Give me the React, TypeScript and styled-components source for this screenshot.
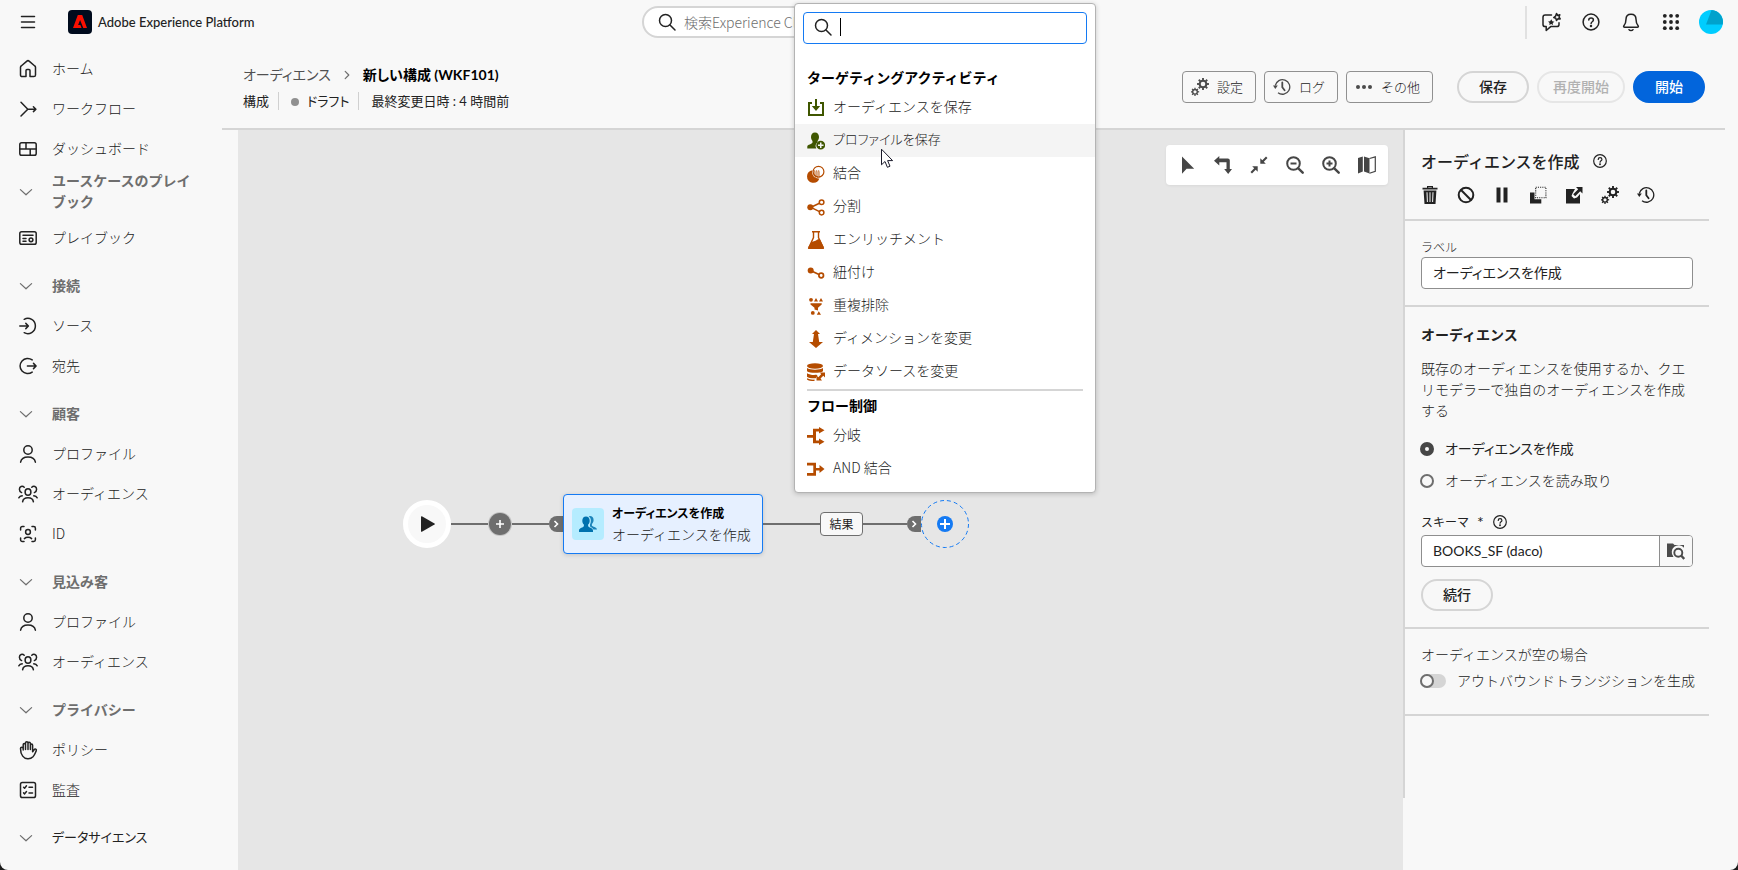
import React from "react";
import styled, { createGlobalStyle, css } from "styled-components";

const Global = createGlobalStyle`
  *, *::before { box-sizing: border-box; }
  body {
    margin: 0;
    background: #1c1c1c;
    color: #222;
    font-family: "Noto Sans CJK JP", "Noto Sans", sans-serif;
    font-size: 14px;
    line-height: 21px;
  }
  button, input { font: inherit; color: inherit; }
  h1, h2, h3, p { margin: 0; padding: 0; }
  a { color: inherit; text-decoration: none; }
`;

/* Proportional kana with a narrower Latin face. */
const palt = css`
  font-family: Lato, "Noto Sans CJK JP", sans-serif;
  font-feature-settings: "palt";
`;

/* ---------- icons ---------- */

const Line = styled.svg.attrs({ viewBox: "0 0 20 20", "aria-hidden": true })<{ $size?: number }>`
  width: ${(p) => p.$size ?? 20}px;
  height: ${(p) => p.$size ?? 20}px;
  flex: none;
  display: block;
  fill: none;
  stroke: currentColor;
  stroke-width: 1.5;
  stroke-linecap: round;
  stroke-linejoin: round;
`;

const Solid = styled.svg.attrs({ viewBox: "0 0 18 18", "aria-hidden": true })<{ $size?: number }>`
  width: ${(p) => p.$size ?? 18}px;
  height: ${(p) => p.$size ?? 18}px;
  flex: none;
  display: block;
  fill: currentColor;
`;

const MenuIcon = () => <Line><path d="M3.5 4.5h13M3.5 10h13M3.5 15.5h13" /></Line>;
const HomeIcon = () => <Line><path d="M8 17.6H4.2a1.7 1.7 0 0 1-1.7-1.7V8.3c0-.5.2-1 .7-1.3l5.7-4.9a1.7 1.7 0 0 1 2.2 0L16.8 7c.5.3.7.8.7 1.3v7.6a1.7 1.7 0 0 1-1.7 1.7H12v-6c0-.6-.5-1-1-1H9c-.6 0-1 .4-1 1z" /></Line>;
const WorkflowIcon = () => <Line><path d="M3 3.2l6.8 7L3 17M9.8 10.2h8M15.4 7.8l2.5 2.4-2.5 2.4" /></Line>;
const DashboardIcon = () => <Line><rect x="1.8" y="3.7" width="16.4" height="12.6" rx="1.8" /><path d="M1.8 10h16.4M8 3.7V10M12.2 10v6.3" /></Line>;
const PlaybookIcon = () => <Line><rect x="1.8" y="3.7" width="16.4" height="12.6" rx="1.8" /><path d="M5 7.2h10M5 10.4h3M5 13.2h3" /><circle cx="13" cy="11.8" r="1.9" /></Line>;
const SourceIcon = () => <Line><path d="M6.2 3.3a7.6 7.6 0 1 1 0 13.4M1.8 10h8.5M7.8 7.4l2.6 2.6-2.6 2.6" /></Line>;
const DestIcon = () => <Line><path d="M14.2 3.9a7.6 7.6 0 1 0 0 12.2M9.4 10h8.6M15.5 7.4l2.6 2.6-2.6 2.6" /></Line>;
const PersonIcon = () => <Line><circle cx="10" cy="6" r="4.2" /><path d="M2.6 18.2c.6-3.4 3.5-5.2 7.4-5.2s6.800 1.800 7.400 5.200" /></Line>;
const PeopleIcon = () => <Line><ellipse cx="10" cy="8" rx="2.9" ry="3.300" /><path d="M4.600 17.800c.4-2.700 2.500-4 5.400-4s5 1.300 5.400 4M6.200 3.300C4.400 1.500 1.400 2.500 1.400 5.300c0 1.500.9 2.800 2.200 3.300M13.800 3.300c1.800-1.800 4.800-.8 4.800 2 0 1.500-.9 2.800-2.200 3.300M.8 13.800c.6-1 1.700-1.700 3.400-2M19.200 13.800c-.6-1-1.700-1.700-3.400-2" /></Line>;
const IdentityIcon = () => <Line><path d="M2.600 6V4.300c0-1 .7-1.700 1.700-1.700H6M14 2.600h1.700c1 0 1.700.7 1.700 1.700V6M17.400 14v1.700c0 1-.7 1.700-1.700 1.700H14M6 17.400H4.300c-1 0-1.700-.7-1.700-1.700V14M6.400 14.600c1.800-1.700 5.400-1.700 7.200 0" /><circle cx="10" cy="8" r="2.400" /></Line>;
const HandIcon = () => <Line><path d="M5.200 10V4.800c0-1.600 2.300-1.600 2.300 0V3c0-1.700 2.500-1.700 2.500 0v6.500M10 3.600c0-1.700 2.400-1.700 2.400 0v6M12.400 5.200c0-1.500 2.200-1.500 2.200 0v6.600l1.500-2.100c1-1.300 2.800-.4 2.100 1.200-1 2.200-1.700 4.300-3.200 5.900a6.800 6.800 0 0 1-10.300-.7C3.200 14.200 2.500 12 2.500 8.400c0-1.600 2.600-1.600 2.700 0M7.500 3.600v5.900" /></Line>;
const AuditIcon = () => <Line><rect x="2.500" y="2.500" width="15" height="15" rx="1.800" /><path d="M5.600 7.200l1 1 1.900-2.400M5.600 12.900l1 1 1.900-2.400M11 7.300h3.500M11 13h3.500" /></Line>;
const ChevronIcon = () => <Line><path d="M3 7l7 6.500L17 7" /></Line>;
const SmallChevron = () => <Line $size={12}><path strokeWidth="2" d="M7 4l6 6-6 6" /></Line>;
const SearchIcon = () => <Line><circle cx="8.500" cy="8.500" r="6" /><path d="M13 13l5 5" /></Line>;
const HelpIcon = ({ size }: { size?: number }) => <Line $size={size}><circle cx="10" cy="10" r="7.900" /><path d="M7.800 8c0-2.800 4.600-2.800 4.600 0 0 1.800-2.300 1.700-2.300 3.500" /><circle cx="10" cy="14" r=".5" /></Line>;
const ChatIcon = () => <Line><path d="M10.500 3H4.200C3 3 2 3.900 2 5.200v7.300c0 1.200 1 2.100 2.200 2.100h1v3.900l4.500-3.900h6.100c1.200 0 2.200-.9 2.200-2.100v-1.800" /><path fill="currentColor" stroke="none" d="M10.300 7.300l1 1.900 2.100.5-1.700 1.300.3 2.100-1.800-1-1.900.9.300-2.100L7 9.500l2.100-.3z" /><path d="M15.500 1.400l1 2 2.300-.6-.8 2.200 1.200 1.900-2.200-.1-1.500 1.600-.7-2.100-2.100-.8 1.800-1.300z" /></Line>;
const BellIcon = () => <Line><path d="M10 2.200c-3.200 0-5 2.300-5 5.100 0 3.200-.7 4.800-2.100 6.400-.6.800-.2 1.600.7 1.600h12.800c.9 0 1.300-.8.700-1.600C15.700 12.100 15 10.500 15 7.300c0-2.800-1.800-5.100-5-5.100zM8 17.700c.8 1.200 3.200 1.200 4 0" /></Line>;
const AppsIcon = () => (
  <Line>
    {[3.8, 10, 16.2].map((y) =>
      [3.8, 10, 16.2].map((x) => <circle key={`${x}-${y}`} cx={x} cy={y} r="1.900" fill="currentColor" stroke="none" />)
    )}
  </Line>
);

const Gear = ({ x, y, r, teeth = 8 }: { x: number; y: number; r: number; teeth?: number }) => (
  <g transform={`translate(${x} ${y})`} fill="none" stroke="currentColor">
    <circle r={r * 0.68} strokeWidth={r * 0.42} />
    {Array.from({ length: teeth }, (_, i) => (
      <path key={i} transform={`rotate(${(360 / teeth) * i})`} d={`M0 ${-r * 0.75}V${-r * 1.22}`} strokeWidth={r * 0.38} />
    ))}
  </g>
);
const GearsIcon = () => <Solid><Gear x={12} y={6} r={4.900} /><Gear x={4} y={13.800} r={3.400} /></Solid>;
const HistoryIcon = () => <Solid><path fill="none" stroke="currentColor" strokeWidth="1.300" d="M2.300 7.500A7.300 7.300 0 1 1 5 14.700" /><path d="M0 7.500h4.800L2.300 11z" /><path fill="none" stroke="currentColor" strokeWidth="1.800" strokeLinecap="round" d="M9.300 4.500v4.700l2.300 3" /></Solid>;
const MoreIcon = () => <Solid><circle cx="3" cy="9" r="2" /><circle cx="9" cy="9" r="2" /><circle cx="15" cy="9" r="2" /></Solid>;

const PointerIcon = () => <Solid><path d="M4 .5v17.300l4.600-5.100h7.600z" /></Solid>;
const RouteIcon = () => <Solid><path d="M5.300 0v2.500h8.500c1.200 0 2 .8 2 2V13H18l-3.800 5-4-5h2.300V6.300H5.300v3.200L0 4.700z" /></Solid>;
const CollapseIcon = () => <Solid><path d="M10.300 2.200v5.500h5.500l-2-2L17.500 2 16 .5l-3.700 3.700zM7.700 15.800v-5.500H2.200l2 2L.5 16 2 17.500l3.700-3.700z" /></Solid>;
const ZoomIcon = ({ plus }: { plus?: boolean }) => (
  <Solid><g fill="none" stroke="currentColor" strokeWidth="2"><circle cx="7.500" cy="7.500" r="6.300" /><path strokeLinecap="round" strokeWidth="2.400" d="M12.300 12.300l4.400 4.400" /><path d={plus ? "M4.500 7.500h6M7.500 4.500v6" : "M4.500 7.500h6"} /></g></Solid>
);
const MapIcon = () => <Solid><path d="M0 2l4.800-1.500v15L0 17.500zM6 .5l5.500 1.800v15.200L6 15.500z" /><path d="M11.500 2.500L17.300.8v14.500l-5.800 2" fill="none" stroke="currentColor" strokeWidth="1.200" /></Solid>;

const TrashIcon = () => <Solid><path d="M6 0h6v1.800h4.500v1.700h-15V1.800H6zM7.200 1.200v.6h3.600v-.6z" fillRule="evenodd" /><path fillRule="evenodd" d="M2.600 4.500h12.800L14.500 18h-11zM5.500 6.300l.4 9.700h1L6.500 6.300zm3 0V16h1V6.300zm3 0L11.100 16h1l.4-9.700z" /></Solid>;
const BanIcon = () => <Solid><g fill="none" stroke="currentColor" strokeWidth="2"><circle cx="9" cy="9" r="7.300" /><path d="M3.800 3.800l10.400 10.400" /></g></Solid>;
const PauseIcon = () => <Solid><path d="M3.500 1.500h4v15h-4zM10.500 1.500h4v15h-4z" /></Solid>;
const CopyIcon = () => <Solid><path d="M1 6.500h4.500v6.800h6.800V17.500H1z" /><rect x="6.700" y="1.200" width="10.200" height="10.600" fill="none" stroke="currentColor" strokeWidth="1.100" strokeDasharray="1.100 1.100" /></Solid>;
const OpenIcon = () => <Solid><path d="M1 3h9L7.500 7.500 6.500 10l2.500 2.500 3-1L15 8v9.500H1z" /><path d="M11 1h6.500v6.500l-2.300-2.300-5 5-2-2 5-5z" /></Solid>;
const FolderSearchIcon = () => <Solid><path d="M0 1.500h6L7.500 3H17v2.800A6.300 6.300 0 0 0 6.300 14.500V15H0z" /><circle cx="11.300" cy="10.700" r="4" fill="none" stroke="currentColor" strokeWidth="1.900" /><path d="M14.300 13.700l3 3.300" stroke="currentColor" strokeWidth="2.400" /></Solid>;

const SaveAudienceIcon = () => <Solid><path d="M1 3h4v2H3v10h12V5h-2V3h4v14H1z" /><path d="M8 0h2v7h3.200L9 12 4.800 7H8z" /></Solid>;
const SaveProfileIcon = () => <Solid><path d="M8 .5c2.500 0 4 1.800 4 4.600 0 1.500-.6 3-1.400 3.900v1.200a5 5 0 0 0-1.300 6.300H.3v-2c0-1.800 5-2.500 5.200-4V9C4.600 8.100 4 6.600 4 5.100 4 2.300 5.500.5 8 .5z" /><path fillRule="evenodd" d="M13.700 8.800a4.400 4.400 0 1 1 0 8.800 4.400 4.400 0 0 1 0-8.800zM13 10.500v2h-2V14h2v2h1.500v-2h2v-1.500h-2v-2z" /></Solid>;
const CombineIcon = () => (
  <Solid>
    <path d="M5.500 5.200a6.300 6.300 0 1 0 6.800 8.300 6.300 6.300 0 0 1-6.800-8.300z" />
    <circle cx="11.500" cy="6.700" r="5.400" fill="none" stroke="currentColor" strokeWidth="1.200" />
    <path d="M7 6h6M6.500 8h6.500M6.500 10h6.500M8 12h4.500" stroke="currentColor" strokeWidth="1.200" strokeDasharray="1.200 .8" />
    <path d="M7.500 7h5M7.500 9h5M7.500 11h5" stroke="currentColor" strokeWidth="1" strokeDasharray="1 1" />
  </Solid>
);
const SplitIcon = () => <Solid><circle cx="3.300" cy="9.300" r="3" /><g fill="none" stroke="currentColor" strokeWidth="1.500"><path d="M4 9.300L13 5M4 9.300l9 4.500" /><circle cx="14.600" cy="4.200" r="2.300" /><circle cx="14.600" cy="14.600" r="2.300" /></g></Solid>;
const FlaskIcon = () => <Solid><path d="M5 0h8v1.500H5z" /><path d="M6.500 1v5.500L2 16.200M11.500 1v5.500L16 16.200" fill="none" stroke="currentColor" strokeWidth="1.400" /><path d="M4.500 11l4-1.200 2.500-1.600 1.800-.2L17 16.500c.3 1-.2 1.500-1 1.500H2c-.8 0-1.300-.5-1-1.500z" /></Solid>;
const LinkIcon = () => <Solid><circle cx="3.700" cy="6.500" r="3" /><g fill="none" stroke="currentColor" strokeWidth="1.700"><path d="M4 6.700l8 3.700" /><circle cx="14.200" cy="11.500" r="2.300" /></g></Solid>;
const FunnelIcon = () => <Solid><circle cx="4" cy="2.800" r="1.900" /><path d="M7 4.600L9 1l2 3.600zM12 4.600L14 1l2 3.600zM3.500 6.200h11.200v1.300L11 10.800v2.800l-3.500-1v-1.800L3.500 7.500zM9.800 17.800l2-3.600 2.200 3.600z" /><circle cx="5.800" cy="15.900" r="1.900" /></Solid>;
const DimensionIcon = () => <Solid><path d="M9 0l4 4h-2l1.200 8H16l-7 6-7-6h3.800L7 4H5z" /></Solid>;
const DatasourceIcon = () => <Solid><ellipse cx="8" cy="3" rx="8" ry="2.700" /><path d="M0 5c3 2.200 13 2.200 16 0v3.200C13 10.400 3 10.400 0 8.200zM0 10.200c2.500 1.600 6 2 9.500 1.600l1 1-1.800 2.500C5 15.500 1.500 15 0 13.700zM0 15.300c2 1 4.500 1.500 7.500 1.300V18C4 18 1 17.500 0 16.500z" /><path d="M13 9.500h5v5l-1.700-1.700-2.800 2.800L15 17.500h-5.500v-5l1.800 1.700 2.800-2.900z" /></Solid>;
const ForkIcon = () => <Solid><path d="M0 8h6V1.800h6V0l5.500 3.200L12 6.500V4.600H9v8.900h3v-2l5.500 3.300L12 18v-1.800H6v-5.500H0z" /></Solid>;
const JoinIcon = () => <Solid><path d="M0 2.800h9V8h3.500V5l5 4-5 4v-2.600H9v5.300H0V13h6.300V5.500H0z" /></Solid>;

/* ---------- page frame ---------- */

const Page = styled.div`
  position: relative;
  min-height: 100vh;
  display: flex;
  flex-direction: column;
  background: #f8f8f8;
  border-radius: 0 0 8px 8px;
  overflow: hidden;
`;

const TopBar = styled.header`
  display: grid;
  grid-template-columns: 1fr 450px 1fr;
  align-items: center;
  height: 44px;
  padding-right: 4px;
`;

const Brand = styled.div`
  display: flex;
  align-items: center;
  padding-left: 18px;
`;

const BrandName = styled.span`
  margin-left: 6px;
  ${palt}
  font-size: 13px;
  font-weight: 500;
`;

const IconButton = styled.button`
  display: grid;
  place-items: center;
  padding: 0;
  border: 0;
  background: none;
  cursor: pointer;
`;

const Logo = styled.svg`
  width: 24px;
  height: 24px;
  margin-left: 30px;
`;

const GlobalSearch = styled.label`
  height: 32px;
  display: flex;
  align-items: center;
  gap: 7px;
  padding: 0 13px;
  border: 2px solid #d5d5d5;
  border-radius: 16px;
  background: #fff;
  input {
    flex: 1;
    border: 0;
    outline: 0;
    padding: 0;
    background: none;
    &::placeholder { color: #6e6e6e; font-weight: 300; opacity: 1; }
  }
`;

const TopActions = styled.div`
  display: flex;
  justify-content: flex-end;
  align-items: center;
  gap: 20px;
  padding-right: 11px;
`;

const TopDivider = styled.span`
  width: 2px;
  height: 33px;
  background: #e1e1e1;
  margin-right: -6px;
`;

const Avatar = styled.svg`
  width: 24px;
  height: 24px;
  margin-left: -2px;
`;

const Columns = styled.div`
  flex: 1;
  display: flex;
`;

/* Text beside an icon, set slightly above the icon's centre. */
const Caption = styled.span`
  padding-bottom: 2px;
`;

const Nav = styled.nav`
  width: 222px;
  flex: none;
  padding-top: 5px;
`;

const NavItem = styled.a`
  display: flex;
  align-items: center;
  gap: 14px;
  height: 40px;
  padding-left: 18px;
  font-weight: 300;
`;

const NavGroup = styled.button<{ $tall?: boolean; $dark?: boolean }>`
  display: flex;
  align-items: center;
  gap: 18px;
  width: 100%;
  height: ${(p) => (p.$tall ? 49 : 40)}px;
  margin-top: ${(p) => (p.$tall ? 0 : 8)}px;
  padding: 0 24px ${(p) => (p.$tall ? 4 : 0)}px 18px;
  border: 0;
  background: none;
  color: ${(p) => (p.$dark ? "#222" : "#6e6e6e")};
  font-weight: ${(p) => (p.$dark ? 400 : 700)};
  text-align: left;
  cursor: pointer;
  ${(p) => p.$dark && css`${palt} font-size: 13px;`}
  svg { width: 16px; height: 16px; color: #6e6e6e; }
`;

const Main = styled.main`
  flex: 1;
  min-width: 0;
  display: flex;
  flex-direction: column;
`;

const PageHead = styled.div`
  display: flex;
  justify-content: space-between;
  align-items: flex-start;
  height: 86px;
  margin-right: 13px;
  padding: 19px 20px 0 21px;
  border-bottom: 2px solid #d5d5d5;
`;

const Crumbs = styled.div`
  display: flex;
  align-items: center;
  gap: 10px;
  ${palt}
  line-height: 24px;
  a { color: #505050; }
  svg { color: #6e6e6e; }
  h1 { font-size: 14px; line-height: 24px; font-weight: 700; color: #000; }
`;

const Meta = styled.div`
  display: flex;
  align-items: center;
  height: 24px;
  margin-top: 2px;
  ${palt}
  font-size: 13px;
  line-height: 18px;
  span + span {
    margin-left: 9px;
    padding-left: 12px;
    border-left: 1px solid #d0d0d0;
  }
`;

const Dot = styled.i`
  display: inline-block;
  width: 8px;
  height: 8px;
  margin-right: 8px;
  border-radius: 50%;
  background: #909090;
`;

const Actions = styled.div`
  display: flex;
  gap: 8px;
  padding-top: 8px;
`;

const ToolButton = styled.button`
  display: flex;
  align-items: center;
  gap: 8px;
  height: 32px;
  padding: 0 12px 0 8px;
  border: 1px solid #909090;
  border-radius: 4px;
  background: #f8f8f8;
  font-size: 13px;
  font-weight: 300;
  svg { color: #4b4b4b; }
`;

const PillButton = styled.button<{ $primary?: boolean }>`
  height: 32px;
  min-width: 72px;
  padding: 0 14px 2px;
  border: 2px solid ${(p) => (p.$primary ? "#0265dc" : "#d5d5d5")};
  border-radius: 16px;
  background: ${(p) => (p.$primary ? "#0265dc" : "#f8f8f8")};
  color: ${(p) => (p.$primary ? "#fff" : "#222")};
  font-weight: 500;
  line-height: 18px;
  &:disabled { border-color: #e6e6e6; color: #b1b1b1; }
`;

const PillGroup = styled.div`
  display: flex;
  gap: 8px;
  margin-left: 16px;
`;

const Work = styled.div`
  flex: 1;
  display: flex;
  padding-left: 16px;
`;

/* ---------- canvas ---------- */

const Canvas = styled.section`
  position: relative;
  flex: 1;
  min-width: 0;
  background: #e6e6e6;
`;

const CanvasTools = styled.div`
  position: absolute;
  top: 15px;
  right: 15px;
  display: flex;
  gap: 18px;
  height: 40px;
  padding: 0 12px;
  border-radius: 4px;
  background: #fff;
  color: #464646;
  box-shadow: 0 1px 3px rgba(0, 0, 0, 0.06);
`;

const Flow = styled.div`
  position: absolute;
  left: 165px;
  top: 364px;
  display: flex;
  align-items: center;
`;

const Edge = styled.span<{ $w: number }>`
  width: ${(p) => p.$w}px;
  height: 2px;
  background: #6e6e6e;
`;

const StartNode = styled.button`
  display: grid;
  place-items: center;
  width: 48px;
  height: 48px;
  padding: 0;
  border: 5px solid #fff;
  border-radius: 50%;
  background: #f8f8f8;
  color: #222;
`;

const AddButton = styled.button`
  display: grid;
  place-items: center;
  width: 22px;
  height: 22px;
  margin: 0 1px;
  padding: 0;
  border: 0;
  border-radius: 50%;
  background: #6e6e6e;
  color: #fff;
  box-shadow: 0 0 0 1px #c4c4c4;
`;

const Port = styled.span`
  display: grid;
  place-items: center;
  width: 14px;
  height: 16px;
  border-radius: 8px 0 0 8px;
  background: #6e6e6e;
  color: #fff;
`;

const Node = styled.article`
  display: flex;
  align-items: center;
  gap: 8px;
  width: 200px;
  height: 60px;
  padding: 0 8px;
  border: 1px solid #147af3;
  border-radius: 4px;
  background: #e6f0ff;
  box-shadow: 0 1px 4px rgba(0, 0, 0, 0.15);
  h3 { ${palt} font-size: 12px; line-height: 20px; font-weight: 700; color: #000; }
  p { line-height: 20px; font-weight: 300; white-space: nowrap; }
`;

const NodeIcon = styled.span`
  display: grid;
  place-items: center;
  flex: none;
  width: 32px;
  height: 32px;
  border-radius: 4px;
  background: #b5ecff;
  color: #0072ae;
`;

const EdgeLabel = styled.span`
  display: grid;
  place-items: center;
  width: 43px;
  height: 24px;
  border: 1px solid #6e6e6e;
  border-radius: 4px;
  background: #f8f8f8;
  font-size: 12px;
  line-height: 16px;
`;

const DropTarget = styled.button`
  width: 48px;
  height: 48px;
  padding: 0;
  border: 0;
  background: none;
  svg { display: block; }
`;

/* ---------- properties panel ---------- */

const Panel = styled.aside`
  flex: none;
  width: 306px;
  height: 668px;
  margin-right: 29px;
  border-left: 2px solid #d5d5d5;
`;

const PanelSection = styled.section<{ $h: number; $pad: number }>`
  height: ${(p) => p.$h}px;
  padding: ${(p) => p.$pad}px 16px 0;
  border-bottom: 2px solid #d5d5d5;
`;

const PanelTitle = styled.h2`
  display: flex;
  align-items: center;
  gap: 12px;
  font-size: 16px;
  line-height: 24px;
  font-weight: 500;
`;

const PanelTools = styled.div`
  display: flex;
  gap: 18px;
  margin-top: 13px;
`;

const FieldLabel = styled.label`
  display: flex;
  align-items: center;
  gap: 8px;
  font-size: 12px;
  line-height: 18px;
  font-weight: 300;
`;

const Field = styled.div`
  display: flex;
  height: 32px;
  margin-top: 1px;
  border: 1px solid #8e8e8e;
  border-radius: 4px;
  background: #fff;
  overflow: hidden;
  input {
    flex: 1;
    min-width: 0;
    padding: 0 11px 2px;
    border: 0;
    outline: 0;
    background: none;
    ${palt}
  }
  button {
    width: 33px;
    border-left: 1px solid #8e8e8e;
    background: #f8f8f8;
    color: #4b4b4b;
  }
`;

const SchemaRow = styled.div`
  margin: 16px 0 12px;
  label { margin-bottom: 4px; font-weight: 400; }
`;

const Required = styled.span`
  ${palt}
  font-size: 16px;
  line-height: 18px;
`;

const SubHead = styled.h3`
  font-size: 14px;
  line-height: 21px;
  font-weight: 700;
`;

const Copy = styled.p`
  margin: 13px 0 12px;
  font-weight: 300;
`;

const Choice = styled.label<{ $on?: boolean }>`
  display: flex;
  align-items: center;
  gap: 12px;
  height: 32px;
  font-weight: ${(p) => (p.$on ? 400 : 300)};
  ${(p) => p.$on && palt}
  input {
    appearance: none;
    width: 14px;
    height: 14px;
    margin: 0 -1px;
    border: 2px solid #6e6e6e;
    border-radius: 50%;
    background: #f8f8f8;
    &:checked { border: 5px solid #464646; }
  }
`;

const Toggle = styled.label`
  display: flex;
  align-items: center;
  gap: 11px;
  height: 32px;
  font-weight: 300;
  white-space: nowrap;
  input {
    appearance: none;
    flex: none;
    width: 26px;
    height: 14px;
    margin: 0 0 0 -1px;
    border-radius: 7px;
    background: #d5d5d5;
  }
  input::before {
    content: "";
    display: block;
    width: 14px;
    height: 14px;
    border: 2px solid #6e6e6e;
    border-radius: 50%;
    background: #f8f8f8;
  }
`;

const EmptyHead = styled.p`
  font-weight: 300;
`;

/* ---------- activity picker ---------- */

const Picker = styled.div`
  position: absolute;
  left: 794px;
  top: 3px;
  width: 302px;
  padding: 8px 0 7px;
  border: 1px solid #b3b3b3;
  border-radius: 4px;
  background: #fff;
  box-shadow: 0 1px 5px rgba(0, 0, 0, 0.2);
`;

const PickerSearch = styled.label`
  display: flex;
  align-items: center;
  gap: 7px;
  height: 32px;
  margin: 0 8px 23px;
  padding: 0 0 2px 9px;
  border: 1px solid #147af3;
  border-radius: 4px;
  input { width: 200px; border: 0; outline: 0; padding: 0; background: none; }
`;

const Caret = styled.span`
  width: 1px;
  height: 18px;
  margin-right: -7px;
  background: #000;
`;

const PickerHead = styled.h3`
  height: 24px;
  padding-left: 12px;
  font-size: 14px;
  line-height: 21px;
  font-weight: 700;
  color: #000;
`;

const PickerItem = styled.button<{ $active?: boolean; $green?: boolean }>`
  display: flex;
  align-items: center;
  gap: 8px;
  width: 100%;
  height: 33px;
  padding: 0 12px;
  border: 0;
  background: ${(p) => (p.$active ? "#f4f4f4" : "none")};
  font-weight: 300;
  text-align: left;
  ${Caption} { ${(p) => p.$active && css`${palt} font-size: 13px;`} }
  svg { color: ${(p) => (p.$green ? "#3f5600" : "#b54c00")}; }
`;

const PickerRule = styled.hr`
  height: 2px;
  margin: 1px 12px 4px;
  border: 0;
  background: #d5d5d5;
`;

const MouseCursor = styled.svg`
  position: absolute;
  left: 881px;
  top: 148px;
  width: 13px;
  height: 21px;
`;

/* ---------- data ---------- */

type Entry = { label: string; icon?: React.FC; tall?: boolean; dark?: boolean };

const nav: Entry[] = [
  { label: "ホーム", icon: HomeIcon },
  { label: "ワークフロー", icon: WorkflowIcon },
  { label: "ダッシュボード", icon: DashboardIcon },
  { label: "ユースケースのプレイブック", tall: true },
  { label: "プレイブック", icon: PlaybookIcon },
  { label: "接続" },
  { label: "ソース", icon: SourceIcon },
  { label: "宛先", icon: DestIcon },
  { label: "顧客" },
  { label: "プロファイル", icon: PersonIcon },
  { label: "オーディエンス", icon: PeopleIcon },
  { label: "ID", icon: IdentityIcon },
  { label: "見込み客" },
  { label: "プロファイル", icon: PersonIcon },
  { label: "オーディエンス", icon: PeopleIcon },
  { label: "プライバシー" },
  { label: "ポリシー", icon: HandIcon },
  { label: "監査", icon: AuditIcon },
  { label: "データサイエンス", dark: true },
];

const targeting: { label: string; icon: React.FC; green?: boolean; active?: boolean }[] = [
  { label: "オーディエンスを保存", icon: SaveAudienceIcon, green: true },
  { label: "プロファイルを保存", icon: SaveProfileIcon, green: true, active: true },
  { label: "結合", icon: CombineIcon },
  { label: "分割", icon: SplitIcon },
  { label: "エンリッチメント", icon: FlaskIcon },
  { label: "紐付け", icon: LinkIcon },
  { label: "重複排除", icon: FunnelIcon },
  { label: "ディメンションを変更", icon: DimensionIcon },
  { label: "データソースを変更", icon: DatasourceIcon },
];

const flowControl = [
  { label: "分岐", icon: ForkIcon },
  { label: "AND 結合", icon: JoinIcon },
];

const canvasTools: [string, React.ReactNode][] = [
  ["選択", <PointerIcon />],
  ["レイアウト", <RouteIcon />],
  ["全体表示", <CollapseIcon />],
  ["縮小", <ZoomIcon />],
  ["拡大", <ZoomIcon plus />],
  ["マップ", <MapIcon />],
];

const panelTools: [string, React.ReactNode][] = [
  ["削除", <TrashIcon />],
  ["無効化", <BanIcon />],
  ["一時停止", <PauseIcon />],
  ["コピー", <CopyIcon />],
  ["開く", <OpenIcon />],
  ["設定", <GearsIcon />],
  ["履歴", <HistoryIcon />],
];

/* ---------- page ---------- */

const Header = () => (
  <TopBar>
    <Brand>
      <IconButton aria-label="メニュー"><MenuIcon /></IconButton>
      <Logo viewBox="0 0 24 24" aria-hidden>
        <rect width="24" height="24" rx="4" fill="#000b1d" />
        <path fill="#fa0f00" d="M9.800 5h4.400L19 18h-3.700l-3.200-8-2 5h2.300l1.200 3H5z" />
      </Logo>
      <BrandName>Adobe Experience Platform</BrandName>
    </Brand>
    <GlobalSearch>
      <SearchIcon />
      <input aria-label="検索" placeholder="検索Experience Cloud" />
    </GlobalSearch>
    <TopActions>
      <TopDivider />
      <IconButton aria-label="アシスタント"><ChatIcon /></IconButton>
      <IconButton aria-label="ヘルプ"><HelpIcon /></IconButton>
      <IconButton aria-label="通知"><BellIcon /></IconButton>
      <IconButton aria-label="アプリ"><AppsIcon /></IconButton>
      <IconButton aria-label="アカウント">
        <Avatar viewBox="0 0 24 24">
          <circle cx="12" cy="12" r="12" fill="#00cdff" />
          <path d="M12 1.500L7 14.500h16.700A12 12 0 0 0 12.500 0z" fill="#00a2cc" />
        </Avatar>
      </IconButton>
    </TopActions>
  </TopBar>
);

const Sidebar = () => (
  <Nav>
    {nav.map(({ label, icon: Icon, tall, dark }, i) =>
      Icon ? (
        <NavItem href="#" key={i}><Icon /><Caption>{label}</Caption></NavItem>
      ) : (
        <NavGroup key={i} $tall={tall} $dark={dark}><ChevronIcon /><Caption>{label}</Caption></NavGroup>
      )
    )}
  </Nav>
);

const ComposerHead = () => (
  <PageHead>
    <div>
      <Crumbs>
        <a href="#">オーディエンス</a>
        <SmallChevron />
        <h1>新しい構成 (WKF101)</h1>
      </Crumbs>
      <Meta>
        <span>構成</span>
        <span><Dot />ドラフト</span>
        <span>最終変更日時 : 4 時間前</span>
      </Meta>
    </div>
    <Actions>
      <ToolButton><GearsIcon /><Caption>設定</Caption></ToolButton>
      <ToolButton><HistoryIcon /><Caption>ログ</Caption></ToolButton>
      <ToolButton><MoreIcon /><Caption>その他</Caption></ToolButton>
      <PillGroup>
        <PillButton>保存</PillButton>
        <PillButton disabled>再度開始</PillButton>
        <PillButton $primary>開始</PillButton>
      </PillGroup>
    </Actions>
  </PageHead>
);

const InputPort = () => (
  <Port><svg width="8" height="8" viewBox="0 0 8 8"><path d="M2.500 1l3 3-3 3" fill="none" stroke="#fff" strokeWidth="1.600" /></svg></Port>
);

const Composer = () => (
  <Canvas>
    <CanvasTools>
      {canvasTools.map(([name, icon]) => <IconButton key={name} aria-label={name}>{icon}</IconButton>)}
    </CanvasTools>
    <Flow>
      <StartNode aria-label="開始"><svg width="16" height="16" viewBox="0 0 16 16"><path d="M2 .8v14.400c0 .5.500.7.900.5L15.500 8.500a.6.600 0 0 0 0-1L2.900.3c-.4-.2-.9 0-.9.500z" fill="currentColor" /></svg></StartNode>
      <Edge $w={37} />
      <AddButton aria-label="追加"><svg width="10" height="10" viewBox="0 0 10 10"><path d="M5 1v8M1 5h8" stroke="#fff" strokeWidth="1.600" /></svg></AddButton>
      <Edge $w={37} />
      <InputPort />
      <Node>
        <NodeIcon>
          <Solid $size={18}>
            <path d="M11 1c2 0 3.600 1.500 3.600 4 0 1.700-.8 3.200-1.700 4v1.500c.3 1.200 5.100 1.500 5.100 4h-3.600c-.6-1.500-2.400-2.500-3.400-3V9.500c1.200-2.500 1.600-6-1.300-8.200z" opacity=".85" />
            <path d="M7 1.500c2.200 0 3.700 1.600 3.700 4.200 0 1.600-.7 3-1.600 3.900v1.500c.2 1.500 4.900 2 4.900 4.400V17H0v-1.500c0-2.400 4.700-2.900 4.900-4.400V9.600c-.9-.9-1.600-2.300-1.600-3.900C3.300 3.100 4.800 1.500 7 1.500z" />
          </Solid>
        </NodeIcon>
        <div>
          <h3>オーディエンスを作成</h3>
          <p>オーディエンスを作成</p>
        </div>
      </Node>
      <Edge $w={57} />
      <EdgeLabel>結果</EdgeLabel>
      <Edge $w={44} />
      <InputPort />
      <DropTarget aria-label="アクティビティを追加">
        <svg width="48" height="48" viewBox="0 0 48 48">
          <circle cx="24" cy="24" r="23.500" fill="none" stroke="#147af3" strokeDasharray="4 3" />
          <circle cx="24" cy="24" r="8" fill="#147af3" />
          <path d="M24 19v10M19 24h10" stroke="#fff" strokeWidth="2" />
        </svg>
      </DropTarget>
    </Flow>
  </Canvas>
);

const Properties = () => (
  <Panel>
    <PanelSection $h={91} $pad={19}>
      <PanelTitle>オーディエンスを作成 <HelpIcon size={16} /></PanelTitle>
      <PanelTools>
        {panelTools.map(([name, icon]) => <IconButton key={name} aria-label={name}>{icon}</IconButton>)}
      </PanelTools>
    </PanelSection>
    <PanelSection $h={86} $pad={17}>
      <FieldLabel htmlFor="label">ラベル</FieldLabel>
      <Field><input id="label" defaultValue="オーディエンスを作成" /></Field>
    </PanelSection>
    <PanelSection $h={322} $pad={17}>
      <SubHead>オーディエンス</SubHead>
      <Copy>既存のオーディエンスを使用するか、クエリモデラーで独自のオーディエンスを作成する</Copy>
      <Choice $on><input type="radio" name="mode" defaultChecked /><Caption>オーディエンスを作成</Caption></Choice>
      <Choice><input type="radio" name="mode" /><Caption>オーディエンスを読み取り</Caption></Choice>
      <SchemaRow>
        <FieldLabel htmlFor="schema">スキーマ <Required>*</Required> <HelpIcon size={16} /></FieldLabel>
        <Field>
          <input id="schema" defaultValue="BOOKS_SF (daco)" />
          <IconButton aria-label="参照"><FolderSearchIcon /></IconButton>
        </Field>
      </SchemaRow>
      <PillButton>続行</PillButton>
    </PanelSection>
    <PanelSection $h={87} $pad={15}>
      <EmptyHead>オーディエンスが空の場合</EmptyHead>
      <Toggle><input type="checkbox" role="switch" /><Caption>アウトバウンドトランジションを生成</Caption></Toggle>
    </PanelSection>
  </Panel>
);

const ActivityPicker = () => (
  <Picker>
    <PickerSearch>
      <SearchIcon />
      <Caret />
      <input aria-label="アクティビティを検索" />
    </PickerSearch>
    <PickerHead>ターゲティングアクティビティ</PickerHead>
    {targeting.map(({ label, icon: Icon, green, active }) => (
      <PickerItem key={label} $green={green} $active={active}><Icon /><Caption>{label}</Caption></PickerItem>
    ))}
    <PickerRule />
    <PickerHead>フロー制御</PickerHead>
    {flowControl.map(({ label, icon: Icon }) => (
      <PickerItem key={label}><Icon /><Caption>{label}</Caption></PickerItem>
    ))}
  </Picker>
);

export default function App() {
  return (
    <>
      <Global />
      <Page>
        <Header />
        <Columns>
          <Sidebar />
          <Main>
            <ComposerHead />
            <Work>
              <Composer />
              <Properties />
            </Work>
          </Main>
        </Columns>
        <ActivityPicker />
        <MouseCursor viewBox="0 0 13 21" aria-hidden>
          <path d="M.5 1.200v15.600l3.500-3.300 2.400 5.800 2.600-1.100-2.400-5.600h5z" fill="#fff" stroke="#1a1a2a" />
        </MouseCursor>
      </Page>
    </>
  );
}
